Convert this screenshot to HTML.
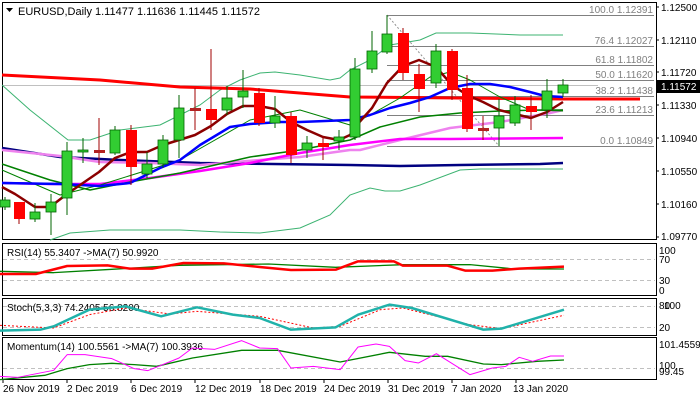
<!DOCTYPE html>
<html><head><meta charset="utf-8"><style>
html,body{margin:0;padding:0;background:#fff;}
svg{display:block;font-family:"Liberation Sans",sans-serif;}
</style></head><body>
<svg width="700" height="400" viewBox="0 0 700 400" xmlns="http://www.w3.org/2000/svg">
<rect width="700" height="400" fill="#fff"/>
<!-- frames -->
<g fill="none" stroke="#000" stroke-width="1">
<rect x="2.5" y="2.5" width="654" height="237"/>
<rect x="2.5" y="243.5" width="654" height="52"/>
<rect x="2.5" y="298.5" width="654" height="37"/>
<rect x="2.5" y="337.5" width="654" height="42"/>
</g>
<!-- header -->
<path d="M6 8 L13 8 L9.5 12 Z" fill="#000"/>
<text x="18" y="15" font-size="11" fill="#000">EURUSD,Daily  1.11477 1.11636 1.11445 1.11572</text>
<!-- price axis -->
<g font-size="10" fill="#000">
<text x="661" y="11">1.12500</text>
<text x="661" y="44">1.12110</text>
<text x="661" y="76">1.11720</text>
<text x="661" y="109">1.11330</text>
<text x="661" y="142">1.10940</text>
<text x="661" y="175">1.10550</text>
<text x="661" y="208">1.10160</text>
<text x="661" y="240">1.09770</text>
</g>
<g stroke="#000"><path d="M656 7h3M656 40h3M656 72h3M656 105h3M656 138h3M656 171h3M656 204h3M656 237h3"/></g>
<rect x="657" y="80" width="43" height="13" fill="#000"/>
<text x="661" y="90" font-size="10" fill="#fff">1.11572</text>
<!-- grey horizontal -->
<line x1="3" y1="85.5" x2="598" y2="85.5" stroke="#c0c0c0"/>
<!-- fibo -->
<g stroke="#808080" stroke-width="1">
<path d="M387 15.5H654M387 46.5H654M387 65.5H654M387 80.5H654M387 96.5H654M387 115.5H654M387 146.5H654"/>
</g>
<path d="M387 15 L499 146" stroke="#909090" stroke-dasharray="2,2" fill="none"/>
<g font-size="10" fill="#808080" text-anchor="end">
<text x="653" y="13">100.0 1.12391</text>
<text x="653" y="44">76.4 1.12027</text>
<text x="653" y="63">61.8 1.11802</text>
<text x="653" y="78">50.0 1.11620</text>
<text x="653" y="94">38.2 1.11438</text>
<text x="653" y="113">23.6 1.11213</text>
<text x="653" y="144">0.0 1.10849</text>
</g>
<!-- bollinger -->
<g fill="none" stroke="#3cb371" stroke-width="1">
<polyline points="2,85 30,110 68,140 90,140 120,130 160,125 180,115 200,105 220,90 240,80 260,73 275,72 300,75 330,80 340,78 350,70 370,60 390,45 420,40 436,33 470,33 520,35 563,35"/>
<polyline points="50,240 70,233 110,230 180,230 220,232 260,233 300,228 330,215 350,195 370,188 385,191 400,191 420,185 460,170 480,169 520,169 563,169"/>
</g>
<!-- MA lines -->
<g fill="none" stroke-linejoin="round">
<polyline stroke="#ff0000" stroke-width="3" points="2,75 100,80 180,87 250,89 350,97 563,99 640,99"/>
<polyline stroke="#000080" stroke-width="2.5" points="2,148 60,157 120,160 200,163 350,165 400,166 460,165 540,164 563,163"/>
<polyline stroke="#ee82ee" stroke-width="2.5" points="2,150 60,156 100,162 150,163 200,165 260,160 300,157 350,150 360,150 400,140 450,128 500,122 550,113 563,110"/>
<polyline stroke="#ff00ff" stroke-width="2.5" points="2,183 50,184 100,184 150,178 200,171 250,163 300,153 350,145 400,139 450,139 563,138"/>
<polyline stroke="#008000" stroke-width="1.5" points="2,164 50,180 90,190 130,182 180,173 250,157 300,150 350,140 380,127 420,117 460,113 500,111 540,110 563,110"/>
<polyline stroke="#008000" stroke-width="1" points="2,170 60,195 100,185 180,160 250,120 300,110 350,125 370,115 400,98 430,77 450,72 470,80 500,97 530,110 563,111"/>
<polyline stroke="#0000ff" stroke-width="2.5" points="2,183 60,184 100,186 130,183 160,168 180,160 200,145 230,127 250,124 280,122 300,122 350,120 370,115 390,108 410,103 430,97 450,88 470,84 490,84 510,87 530,92 545,96 563,97"/>
<polyline stroke="#8b0000" stroke-width="2.5" points="2,187 15,194 35,207 50,207 67,194 83,183 99,172 115,158 131,152 147,152 163,145 179,140 195,135 211,126 227,114 243,106 259,106 275,109 291,122 307,130 323,137 339,140 350,135 355,127 372,108 387,83 403,66 419,60 436,67 452,85 467,95 483,102 499,110 515,114 531,118 547,112 563,102"/>
</g>
<!-- candles -->
<g id="c" stroke="#000" stroke-width="0.8">
</g>
<g stroke-width="1">
<!-- x, bodyTop, bodyBot, high, low, color -->
<path stroke="#006400" d="M5 197V210M35 203V222M51 194V235M67 142V215M83 138V163M115 126V155M147 152V178M163 135V168M179 95V158M227 86V115M243 70V108M275 96V128M307 136V158M339 130V150M355 58V140M372 31V73M387 15V54M436 44V88M499 99V146M515 96V126M547 79V118M563 79V97"/>
<path stroke="#a00000" d="M19 202V224M99 118V165M131 125V185M195 88V130M211 49V130M259 88V126M291 112V163M323 136V160M403 28V80M419 64V112M452 49V100M467 75V132M483 116V140M531 95V130"/>
</g>
<g fill="#32cd32" stroke="#006400" stroke-width="0.8">
<rect x="0" y="200" width="10" height="7"/>
<rect x="30" y="212" width="10" height="7"/>
<rect x="46" y="202" width="10" height="10"/>
<rect x="62" y="151" width="10" height="47"/>
<rect x="78" y="150" width="10" height="2"/>
<rect x="110" y="130" width="10" height="23"/>
<rect x="142" y="164" width="10" height="10"/>
<rect x="158" y="140" width="10" height="24"/>
<rect x="174" y="108" width="10" height="32"/>
<rect x="222" y="98" width="10" height="12"/>
<rect x="238" y="91" width="10" height="6"/>
<rect x="270" y="116" width="10" height="7"/>
<rect x="302" y="143" width="10" height="7"/>
<rect x="334" y="137" width="10" height="4"/>
<rect x="350" y="69" width="10" height="68"/>
<rect x="367" y="51" width="10" height="18"/>
<rect x="382" y="34" width="10" height="18"/>
<rect x="431" y="51" width="10" height="32"/>
<rect x="494" y="116" width="10" height="12"/>
<rect x="510" y="105" width="10" height="18"/>
<rect x="542" y="91" width="10" height="19"/>
<rect x="558" y="85" width="10" height="8"/>
</g>
<g fill="#ff0000" stroke="#ff0000">
<rect x="14.5" y="202.5" width="10" height="16"/>
<rect x="94.5" y="150.5" width="10" height="2" fill="#b22222" stroke="#b22222"/>
<rect x="126.5" y="130.5" width="10" height="36"/>
<rect x="190.5" y="108.5" width="10" height="2" fill="#b22222" stroke="#b22222"/>
<rect x="206.5" y="109.5" width="10" height="10"/>
<rect x="254.5" y="93.5" width="10" height="29"/>
<rect x="286.5" y="116.5" width="10" height="38"/>
<rect x="318.5" y="143.5" width="10" height="3"/>
<rect x="398.5" y="33.5" width="10" height="39"/>
<rect x="414.5" y="74.5" width="10" height="14"/>
<rect x="447.5" y="51.5" width="10" height="38"/>
<rect x="462.5" y="88.5" width="10" height="40"/>
<rect x="478.5" y="128.5" width="10" height="2" fill="#b22222" stroke="#b22222"/>
<rect x="526.5" y="106.5" width="10" height="5"/>
</g>
<!-- subpanels -->
<g stroke="#c0c0c0" stroke-dasharray="4,3">
<path d="M3 259.5H655M3 280.5H655M3 306.5H655M3 327.5H655M3 368.5H655"/>
</g>
<g font-size="10" fill="#000">
<text x="7" y="256">RSI(14) 55.3407  -&gt;MA(7) 50.9920</text>
<text x="7" y="311">Stoch(5,3,3) 74.2405 56.8200</text>
<text x="7" y="350">Momentum(14) 100.5561  -&gt;MA(7) 100.3936</text>
<text x="659" y="254">100</text>
<text x="659" y="263">70</text>
<text x="659" y="284">30</text>
<text x="659" y="294">0</text>
<text x="659" y="309">80</text>
<text x="664" y="309">100</text>
<text x="659" y="331">20</text>
<text x="659" y="348">101.4559</text>
<text x="659" y="369">100</text>
<text x="659" y="375">99.45</text>
</g>
<g fill="none" stroke-linejoin="round" transform="translate(0,238) scale(0.4476,0.3333)">
<polyline vector-effect="non-scaling-stroke" stroke="#008000" stroke-width="1.3" points="0,100 120,104 250,94 400,82 600,78 750,88 900,80 1050,80 1150,93 1260,93"/>
<polyline vector-effect="non-scaling-stroke" stroke="#ff0000" stroke-width="2.5" points="0,108 80,108 150,84 240,82 290,92 340,92 410,75 500,76 580,87 650,96 750,95 800,70 880,70 900,83 1000,83 1040,98 1100,98 1160,92 1260,86"/>
<polyline vector-effect="non-scaling-stroke" stroke="#ff0000" stroke-width="1" stroke-dasharray="2,2" points="0,262 120,270 200,230 280,210 380,228 440,220 580,235 700,270 760,265 850,215 900,210 1050,260 1120,272 1260,232"/>
<polyline vector-effect="non-scaling-stroke" stroke="#20b2aa" stroke-width="2.5" points="0,278 90,275 120,265 200,215 280,205 360,235 440,208 520,230 580,240 650,275 750,268 800,230 870,200 920,210 1080,275 1120,272 1260,215"/>
<polyline vector-effect="non-scaling-stroke" stroke="#008000" stroke-width="1.3" points="0,425 100,412 150,392 200,380 250,376 300,380 350,385 430,360 540,337 620,337 760,372 870,343 950,355 1000,355 1080,378 1120,380 1200,370 1260,366"/>
<polyline vector-effect="non-scaling-stroke" stroke="#ff00ff" stroke-width="1" points="0,415 40,418 120,397 150,350 190,350 250,362 300,392 330,398 400,360 430,330 480,334 540,308 580,330 620,332 650,390 700,385 760,395 800,327 840,318 870,325 905,368 935,375 975,347 1050,410 1100,390 1130,385 1160,358 1190,370 1230,354 1260,354"/>
</g>
<!-- date axis -->
<g stroke="#000"><path d="M3 380v3M67 380v3M131 380v3M195 380v3M260 380v3M324 380v3M388 380v3M452 380v3M516 380v3"/></g>
<g font-size="10" fill="#000">
<text x="3" y="392">26 Nov 2019</text>
<text x="67" y="392">2 Dec 2019</text>
<text x="131" y="392">6 Dec 2019</text>
<text x="195" y="392">12 Dec 2019</text>
<text x="260" y="392">18 Dec 2019</text>
<text x="324" y="392">24 Dec 2019</text>
<text x="388" y="392">31 Dec 2019</text>
<text x="452" y="392">7 Jan 2020</text>
<text x="513" y="392">13 Jan 2020</text>
</g>
</svg>
</body></html>
